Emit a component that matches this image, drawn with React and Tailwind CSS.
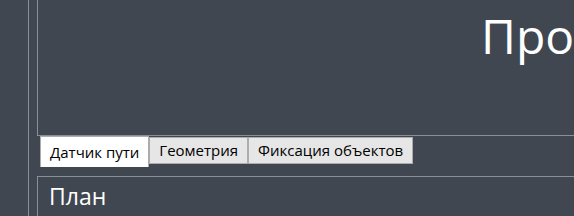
import React, { useState } from "react";

const tabs = ["Датчик пути", "Геометрия", "Фиксация объектов"];

const App = () => {
  const [active, setActive] = useState(0);

  return (
    <div className="w-[574px] h-[216px] bg-[#404751] flex overflow-hidden font-['Segoe_UI','Open_Sans',sans-serif]">
      <div className="w-[28px] shrink-0" />
      <div className="w-px shrink-0 bg-[#8a9097]" />
      <div className="w-[8px] shrink-0" />

      <div className="flex-1 flex flex-col min-w-0">
        {/* Top panel */}
        <div className="h-[136px] shrink-0 border-l border-b border-[#8a9097] overflow-hidden">
          <div className="pl-[443px] pt-[6px] text-white text-[48px] font-normal leading-[60px] whitespace-nowrap">
            Про
          </div>
        </div>

        {/* Tab strip */}
        <div className="h-[40px] shrink-0 flex items-start pl-[3px]">
          {tabs.map((tab, index) =>
            index === active ? (
              <button
                key={tab}
                onClick={() => setActive(index)}
                className="h-[31px] px-[9px] bg-white border border-[#acacac] border-b-0 text-[15px] text-black leading-none whitespace-nowrap"
              >
                {tab}
              </button>
            ) : (
              <button
                key={tab}
                onClick={() => setActive(index)}
                className="h-[27px] mt-[1px] px-[9px] bg-[#e6e6e6] border border-[#acacac] text-[15px] text-black leading-none whitespace-nowrap"
              >
                {tab}
              </button>
            )
          )}
        </div>

        {/* Bottom panel */}
        <div className="flex-1 border-l border-t border-[#8a9097] px-[11px] pt-[5px]">
          <h2 className="text-white text-[23px] leading-[28px]">План</h2>
        </div>
      </div>
    </div>
  );
};

export default App;
